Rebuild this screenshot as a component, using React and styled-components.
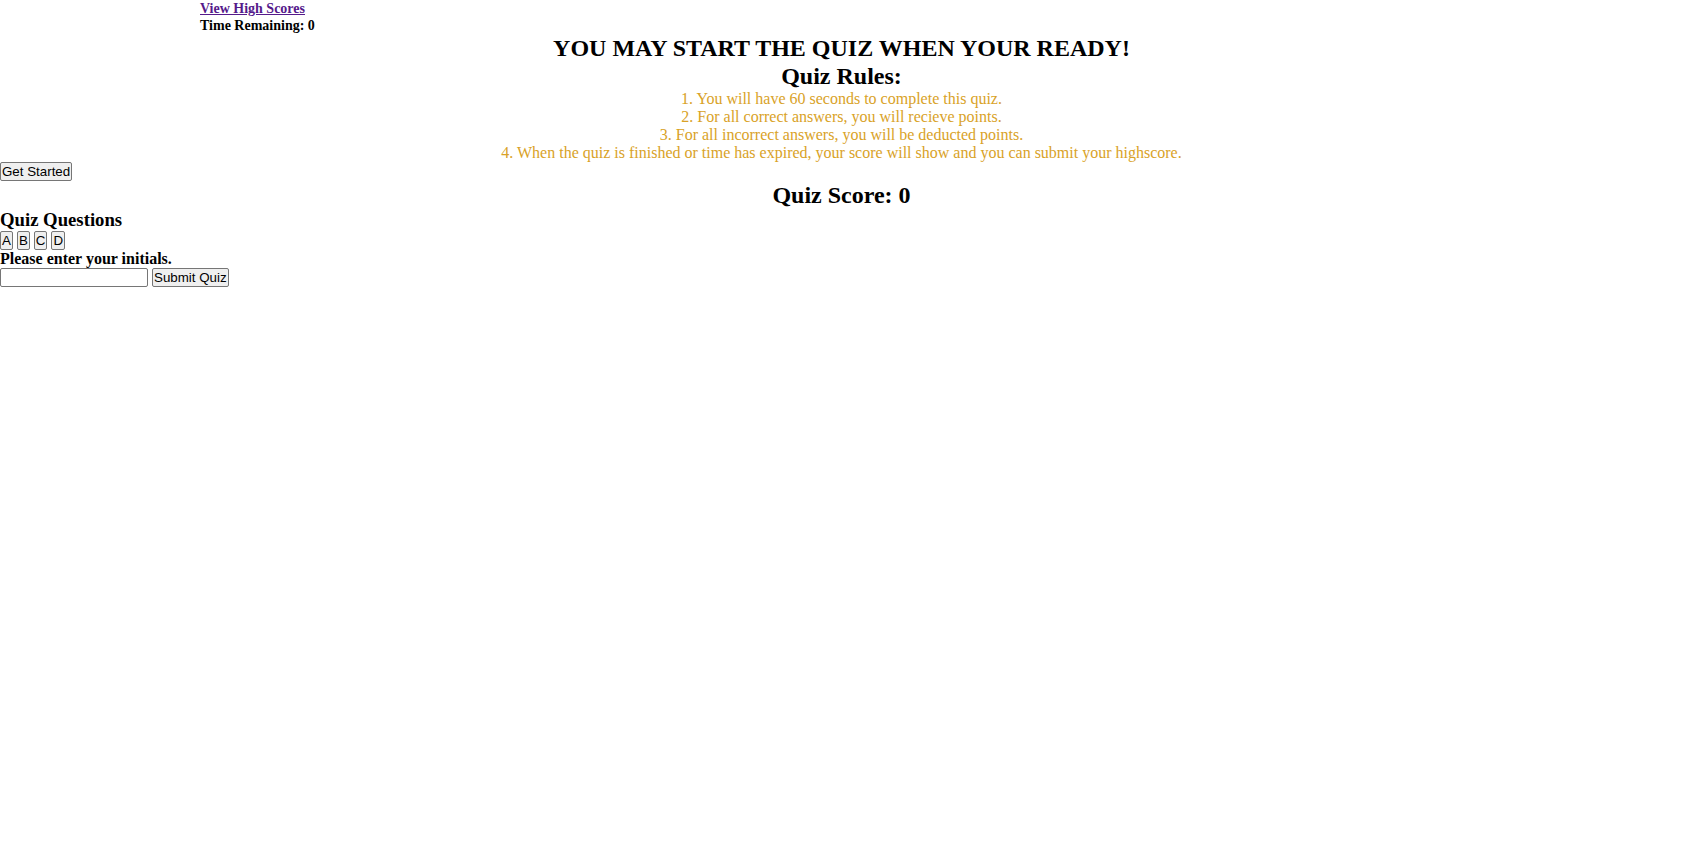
import React from "react";
import styled, { createGlobalStyle } from "styled-components";

const GlobalStyle = createGlobalStyle`
  body {
    margin: 0;
    background: #fff;
    font-family: "Liberation Serif", "Times New Roman", serif;
    color: #000;
  }
`;

const Header = styled.header`
  margin-left: 200px;
  font-size: 14px;
  font-weight: bold;
  line-height: 17px;
`;

const ScoresLink = styled.a`
  display: block;
  color: #551a8b;
  text-decoration: underline;
`;

const Timer = styled.div``;

const Intro = styled.section`
  text-align: center;
`;

const Title = styled.h2`
  margin: 0;
  font-size: 24px;
  line-height: 28px;
`;

const Rule = styled.p`
  margin: 0;
  color: #d9a227;
  font-size: 16px;
  line-height: 18px;
`;

const Button = styled.button`
  font-family: "Liberation Sans", Arial, sans-serif;
  font-size: 13.33px;
  padding: 1px 1px;
  margin: 0;
  border: 1px solid #767676;
  border-radius: 2px;
  background: #efefef;
  color: #000;
  line-height: 15px;
`;

const Row = styled.div`
  display: flex;
  align-items: center;
  gap: ${({ $gap }) => $gap || 0}px;
`;

const Subtitle = styled.h3`
  margin: 0;
  font-size: 18.72px;
  line-height: 22px;
`;

const Label = styled.div`
  font-weight: bold;
  font-size: 16px;
  line-height: 18px;
`;

const Initials = styled.input`
  box-sizing: border-box;
  width: 148px;
  height: 19px;
  padding: 0 2px;
  border: 1px solid #767676;
  border-radius: 2px;
  font-size: 13.33px;
`;

const rules = [
  "1. You will have 60 seconds to complete this quiz.",
  "2. For all correct answers, you will recieve points.",
  "3. For all incorrect answers, you will be deducted points.",
  "4. When the quiz is finished or time has expired, your score will show and you can submit your highscore.",
];

export default function App() {
  return (
    <>
      <GlobalStyle />
      <Header>
        <ScoresLink href="#">View High Scores</ScoresLink>
        <Timer>Time Remaining: 0</Timer>
      </Header>
      <Intro>
        <Title>YOU MAY START THE QUIZ WHEN YOUR READY!</Title>
        <Title>Quiz Rules:</Title>
        {rules.map((r) => (
          <Rule key={r}>{r}</Rule>
        ))}
      </Intro>
      <Row>
        <Button>Get Started</Button>
      </Row>
      <Intro>
        <Title>Quiz Score: 0</Title>
      </Intro>
      <Subtitle>Quiz Questions</Subtitle>
      <Row $gap={4}>
        <Button>A</Button>
        <Button>B</Button>
        <Button>C</Button>
        <Button>D</Button>
      </Row>
      <Label>Please enter your initials.</Label>
      <Row $gap={4}>
        <Initials type="text" />
        <Button>Submit Quiz</Button>
      </Row>
    </>
  );
}
